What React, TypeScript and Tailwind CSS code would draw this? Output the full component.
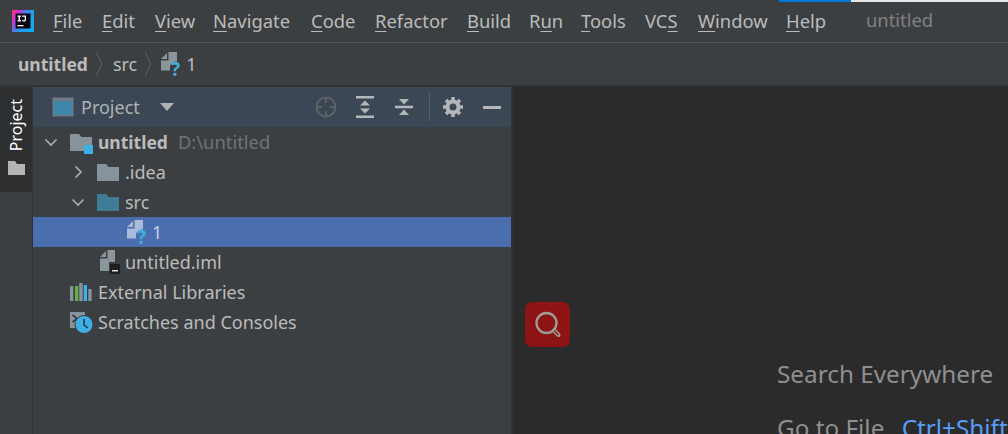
import React from 'react';

const font = "font-['Noto_Sans','Open_Sans',sans-serif]";

const menus: { pre: string; u: string; post: string; cls: string }[] = [
    { pre: '', u: 'F', post: 'ile', cls: 'w-[49px]' },
    { pre: '', u: 'E', post: 'dit', cls: 'w-[53px]' },
    { pre: '', u: 'V', post: 'iew', cls: 'w-[58px]' },
    { pre: '', u: 'N', post: 'avigate', cls: 'w-[98px]' },
    { pre: '', u: 'C', post: 'ode', cls: 'w-[64px]' },
    { pre: '', u: 'R', post: 'efactor', cls: 'w-[92px]' },
    { pre: '', u: 'B', post: 'uild', cls: 'w-[62px]' },
    { pre: 'R', u: 'u', post: 'n', cls: 'w-[52px]' },
    { pre: '', u: 'T', post: 'ools', cls: 'w-[64px]' },
    { pre: 'VC', u: 'S', post: '', cls: 'w-[53px]' },
    { pre: '', u: 'W', post: 'indow', cls: 'w-[88px]' },
    { pre: '', u: 'H', post: 'elp', cls: 'w-[80px]' },
];

const Logo = () => (
    <svg width="22" height="22" viewBox="0 0 22 22" className="shrink-0">
        <defs>
            <linearGradient id="ij" x1="0" y1="0" x2="1" y2="0.600">
                <stop offset="0" stopColor="#fb3a5c" />
                <stop offset="0.250" stopColor="#d62fd0" />
                <stop offset="0.550" stopColor="#2f8ff0" />
                <stop offset="1" stopColor="#14a8f0" />
            </linearGradient>
        </defs>
        <rect width="22" height="22" fill="url(#ij)" />
        <rect x="3.500" y="3.500" width="15" height="15" fill="#0a0610" />
        <path d="M5.500 5.500h3.500v1.200H8v3.600h1v1.200H5.500v-1.200h1V6.700h-1zM10 5.500h4v4.200c0 1.300-.8 2-2 2-1 0-1.700-.4-2.100-1.100l.9-.8c.3.400.6.700 1.100.7.500 0 .8-.3.800-.9V6.700H10z" fill="#fff" />
        <rect x="5.500" y="15" width="6" height="1.300" fill="#fff" />
    </svg>
);

const Chevron = ({ open, color = '#a9adb0' }: { open: boolean; color?: string }) => (
    <svg width="16" height="16" viewBox="0 0 16 16" className="shrink-0">
        <path d={open ? 'M2.500 5.500 8 11l5.500-5.500' : 'M5.500 2.500 11 8l-5.500 5.500'} fill="none" stroke={color} strokeWidth="1.700" />
    </svg>
);

const Folder = ({ color = '#87939a' }: { color?: string }) => (
    <svg width="22" height="18" viewBox="0 0 22 18" className="shrink-0">
        <path d="M0 1h9l2.500 3H22v14H0z" fill={color} />
    </svg>
);

const UnknownFile = ({ fill = '#8b969c', q = '#3db1dc' }: { fill?: string; q?: string }) => (
    <svg width="21" height="24" viewBox="0 0 21 24" className="shrink-0 overflow-visible">
        <path d="M0 7 6 1v6z M7.500 0H16v9.500c-3.500 0-7 2-7 5.500v3.500H0V8.500h7.500z" fill={fill} />
        <text x="10" y="23.500" fontSize="19" fontWeight="700" fill={q} fontFamily="Noto Sans, sans-serif">?</text>
    </svg>
);

const Crumb = () => (
    <svg width="8" height="26" viewBox="0 0 8 26" className="shrink-0">
        <path d="M1 1 7 13 1 25" fill="none" stroke="#5c6164" strokeWidth="1" />
    </svg>
);

const Row = ({ indent, selected, children }: { indent: string; selected?: boolean; children: React.ReactNode }) => (
    <div className={`flex h-[30px] items-center ${indent} ${selected ? 'bg-[#4b6eaf]' : ''}`}>{children}</div>
);

export default function App() {
    return (
        <div className={`relative flex h-[434px] w-[1008px] flex-col overflow-hidden bg-[#3c3f41] ${font}`}>
            {/* titlebar with menu */}
            <div className="relative flex h-[43px] shrink-0 items-center border-b border-[#515456] pl-[12px]">
                <div className="absolute top-0 left-[779px] flex h-[2px]">
                    <div className="w-[72px] bg-[#0078d7]" />
                    <div className="w-[157px] bg-[#e6e6e6]" />
                </div>
                <Logo />
                <div className="ml-[19px] flex text-[18.4px] leading-[24px] text-[#bbbbbb]">
                    {menus.map((m) => (
                        <div key={m.u + m.post} className={m.cls}>
                            {m.pre}
                            <span className="underline decoration-1 underline-offset-[3px]">{m.u}</span>
                            {m.post}
                        </div>
                    ))}
                </div>
                <span className="-mt-[2px] text-[18.4px] leading-[24px] text-[#808080]">untitled</span>
            </div>

            {/* breadcrumb */}
            <div className="flex h-[42px] shrink-0 items-center pl-[18px] text-[18px] text-[#bbbbbb]">
                <span className="text-[17.500px] font-bold">untitled</span>
                <span className="mr-[10px] ml-[7px]"><Crumb /></span>
                <span>src</span>
                <span className="mr-[9px] ml-[7px]"><Crumb /></span>
                <UnknownFile />
                <span className="ml-[4px]">1</span>
            </div>

            <div className="flex min-h-0 flex-1 border-t-2 border-[#323232]">
                {/* tool window stripe */}
                <div className="w-[33px] shrink-0 border-r border-[#323232]">
                    <div className="flex h-[105px] flex-col items-center bg-[#2d2f30] pt-[12px]">
                        <span className="text-[16px] leading-[20px] text-white [writing-mode:vertical-rl] rotate-180">Project</span>
                        <svg width="17" height="14" viewBox="0 0 17 14" className="mt-[10px]">
                            <path d="M0 0h7l2 3h8v11H0z" fill="#b4b4b4" />
                        </svg>
                    </div>
                </div>

                {/* project panel */}
                <div className="flex w-[478px] shrink-0 flex-col text-[#bbbbbb]">
                    <div className="flex h-[40px] shrink-0 items-center bg-[#3b4754] pl-[19px]">
                        <svg width="22" height="20" viewBox="0 0 22 20" className="shrink-0">
                            <rect x="0.500" y="0.500" width="21" height="19" fill="#6e7a85" />
                            <rect x="2" y="4" width="18" height="14" fill="#3f88ab" />
                        </svg>
                        <span className="ml-[7px] text-[18px] text-[#afb1b3]">Project</span>
                        <svg width="14" height="8" viewBox="0 0 14 8" className="ml-[20px]">
                            <path d="M0 0h14L7 8z" fill="#afb1b3" />
                        </svg>
                        <div className="ml-auto flex items-center pr-[10px]">
                            <svg width="22" height="22" viewBox="0 0 22 22">
                                <circle cx="11" cy="11" r="9.500" fill="none" stroke="#5d6266" strokeWidth="2" />
                                <path d="M11 1v6M11 15v6M1 11h6M15 11h6" stroke="#5d6266" strokeWidth="2" />
                            </svg>
                            <svg width="18" height="22" viewBox="0 0 18 22" className="ml-[19px]">
                                <path d="M0 1.250h18M0 20.750h18" stroke="#b4b7b9" strokeWidth="2.500" />
                                <path d="M9 4.500 14 9.500H4zM9 17.500 4 12.500h10z" fill="#b4b7b9" />
                            </svg>
                            <svg width="18" height="22" viewBox="0 0 18 22" className="ml-[21px]">
                                <path d="M0 11h18" stroke="#b4b7b9" strokeWidth="2.500" />
                                <path d="M9 8.500 4 3h10zM9 13.500 14 19H4z" fill="#b4b7b9" />
                            </svg>
                            <div className="ml-[16px] h-[30px] w-px bg-[#555c63]" />
                            <svg width="20" height="20" viewBox="0 0 20 20" className="ml-[13px]">
                                <circle cx="10" cy="10" r="5.500" fill="none" stroke="#b4b7b9" strokeWidth="4" />
                                <path d="M10 0v4M10 16v4M0 10h4M16 10h4M3 3l3 3M14 14l3 3M17 3l-3 3M6 14l-3 3" stroke="#b4b7b9" strokeWidth="3.500" />
                            </svg>
                            <div className="ml-[20px] h-[3px] w-[18px] bg-[#b4b7b9]" />
                        </div>
                    </div>

                    <div className="flex-1 border-b-0 text-[18px]">
                        <Row indent="pl-[10px]">
                            <Chevron open />
                            <span className="relative ml-[11px] flex">
                                <Folder />
                                <span className="absolute -right-[1px] -bottom-[3px] size-[9px] bg-[#3db1e6]" />
                            </span>
                            <span className="ml-[6px] text-[17.500px] font-bold">untitled</span>
                            <span className="ml-[10px] text-[18.400px] text-[#6f7376]">D:\untitled</span>
                        </Row>
                        <Row indent="pl-[37px]">
                            <Chevron open={false} />
                            <span className="ml-[11px] flex"><Folder /></span>
                            <span className="ml-[6px]">.idea</span>
                        </Row>
                        <Row indent="pl-[37px]">
                            <Chevron open />
                            <span className="ml-[11px] flex"><Folder color="#3f7d96" /></span>
                            <span className="ml-[6px]">src</span>
                        </Row>
                        <Row indent="pl-[94px]" selected>
                            <UnknownFile fill="#a9bbd9" />
                            <span className="ml-[4px] text-[#c4cfe2]">1</span>
                        </Row>
                        <Row indent="pl-[67px]">
                            <svg width="20" height="24" viewBox="0 0 20 24" className="shrink-0">
                                <path d="M0 7 6 1v6z M7.500 0H15v12H9v9H0V8.500h7.500z" fill="#8b969c" />
                                <rect x="10" y="14" width="10" height="10" fill="#1e1e1e" />
                                <rect x="12" y="20" width="6" height="1.500" fill="#ddd" />
                            </svg>
                            <span className="ml-[5px]">untitled.iml</span>
                        </Row>
                        <Row indent="pl-[37px]">
                            <svg width="22" height="18" viewBox="0 0 22 18" className="shrink-0">
                                <rect x="0" y="3" width="3.300" height="15" fill="#87939a" />
                                <rect x="5" y="3" width="3.300" height="15" fill="#62b543" />
                                <rect x="9.200" y="0" width="3.500" height="18" fill="#87939a" />
                                <rect x="13.700" y="2" width="3.300" height="16" fill="#3db1e6" />
                                <rect x="18.300" y="6" width="3.300" height="12" fill="#87939a" />
                            </svg>
                            <span className="ml-[6px]">External Libraries</span>
                        </Row>
                        <Row indent="pl-[37px]">
                            <svg width="24" height="24" viewBox="0 0 24 24" className="shrink-0">
                                <rect x="0" y="2" width="15" height="16" fill="#87939a" />
                                <path d="M2.500 5l4.500 3.500-4.500 3.500" fill="none" stroke="#26282a" strokeWidth="1.500" />
                                <circle cx="14" cy="14.500" r="9" fill="#3db1e6" stroke="#3c3f41" strokeWidth="1" />
                                <path d="M14 9v6l4 3" fill="none" stroke="#26343e" strokeWidth="1.500" />
                            </svg>
                            <span className="ml-[4px]">Scratches and Consoles</span>
                        </Row>
                    </div>
                </div>

                {/* editor */}
                <div className="min-w-0 flex-1 border-l-2 border-[#323232] bg-[#2b2b2b] pt-[271px] pl-[264px]">
                    <div className="text-[24.300px] leading-[32px] whitespace-nowrap text-[#8f8f8f]">Search Everywhere</div>
                    <div className="mt-[22px] text-[24.300px] leading-[32px] whitespace-nowrap text-[#8f8f8f]">
                        Go to File <span className="ml-[11px] text-[#589df6]">Ctrl+Shift+N</span>
                    </div>
                </div>
            </div>

            {/* floating search badge */}
            <div className="absolute top-[302px] left-[525px] flex size-[45px] items-center justify-center rounded-[7px] bg-[#8c1414]">
                <svg width="30" height="30" viewBox="0 0 30 30">
                    <circle cx="13.500" cy="13" r="10" fill="none" stroke="#a09a98" strokeWidth="2.300" />
                    <path d="M21 20.500l4.500 4.500" stroke="#a09a98" strokeWidth="4" strokeLinecap="round" />
                    <path d="M21.500 21l3.500 3.500" stroke="#8c1414" strokeWidth="1.200" strokeLinecap="round" />
                </svg>
            </div>
        </div>
    );
}
